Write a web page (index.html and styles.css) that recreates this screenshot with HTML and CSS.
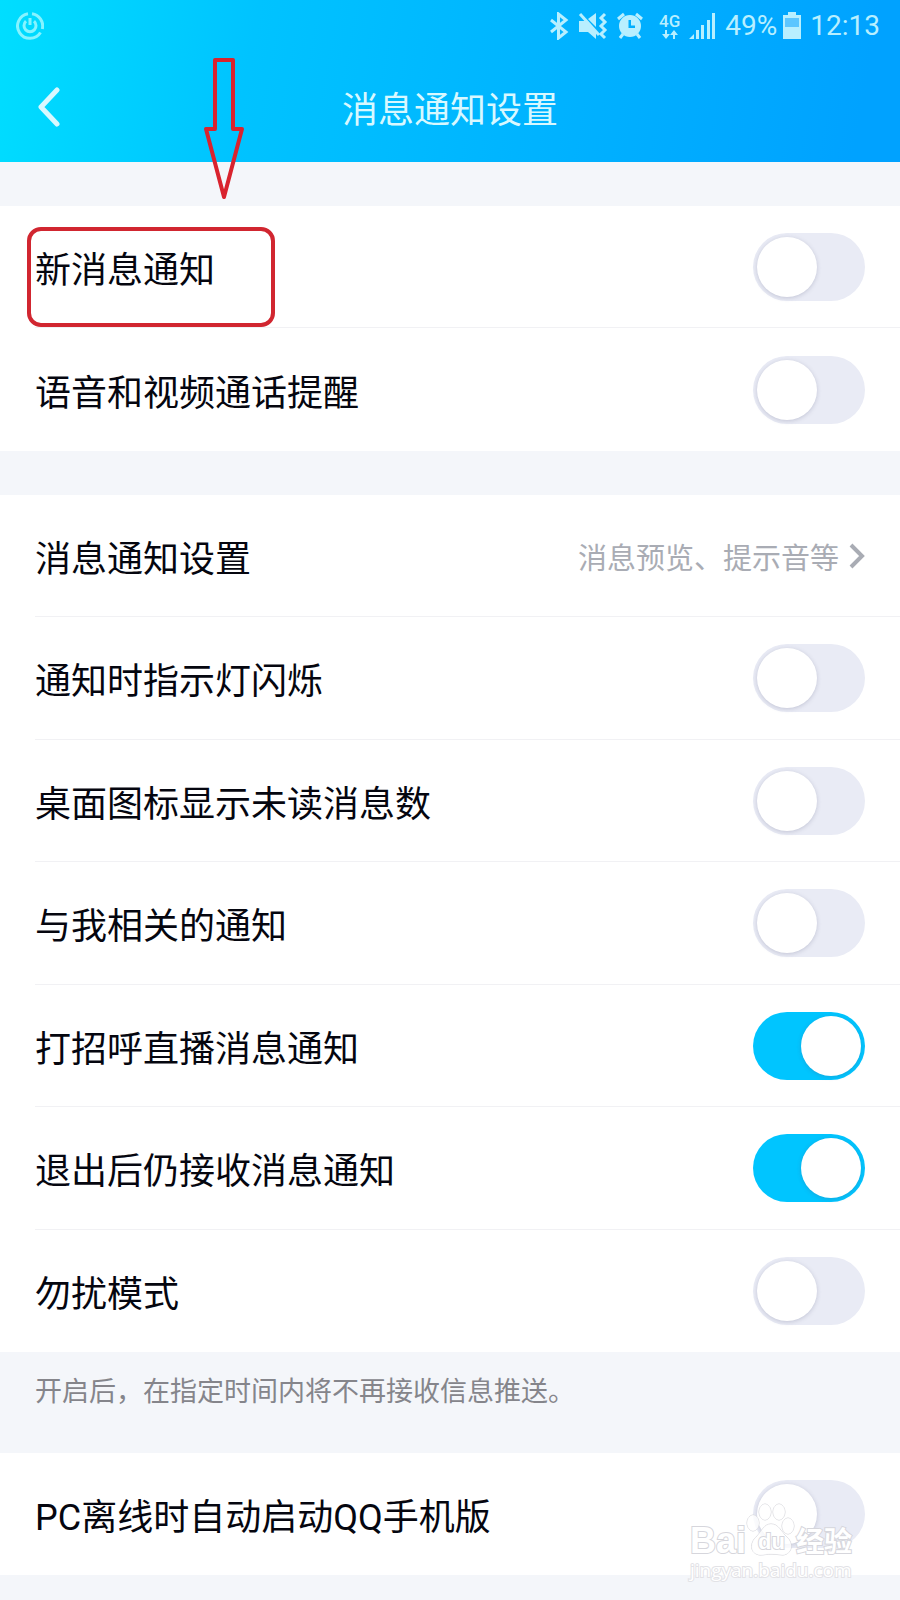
FILE: index.html
```html
<!DOCTYPE html>
<html lang="zh-CN">
<head>
    <meta charset="UTF-8">
    <meta name="viewport" content="width=device-width, initial-scale=1.0">
    <title>消息通知设置</title>
    <link rel="stylesheet" href="styles.css">
</head>
<body>
    <header class="header">
        <div class="status-bar">
            <svg class="status-app" width="28" height="28" viewBox="0 0 28 28" fill="none" stroke="currentColor" stroke-width="3">
                <path d="M12 1.7A12.4 12.4 0 1 0 24.5 20.5M16 1.7A12.4 12.4 0 0 1 26.3 17"/>
                <path d="M10 9.2A6 6 0 1 0 18 9.2M14 6v7"/>
            </svg>
            <div class="status-icons">
                <svg width="20" height="28" viewBox="0 0 20 28" fill="none" stroke="currentColor" stroke-width="3">
                    <path d="M2 8l15 12-7.500 6V2l7.500 6L2 20"/>
                </svg>
                <svg width="30" height="28" viewBox="0 0 30 28" fill="currentColor">
                    <path d="M1 9h6l11 11v7l-8-7H1zM10 7l8-6v14z"/>
                    <path d="M2 2l19 21" stroke="currentColor" stroke-width="3"/>
                    <path d="M27 2l-4 4 4 4-4 4 4 4-4 4 4 4" fill="none" stroke="currentColor" stroke-width="3"/>
                </svg>
                <svg width="26" height="28" viewBox="0 0 26 28" fill="currentColor">
                    <path fill-rule="evenodd" d="M13 3a11 11 0 1 1 0 22 11 11 0 0 1 0-22zm-1.500 5v8H18v-2.500h-4V8z"/>
                    <path d="M1 7l6-5M25 7l-6-5M6 22l-3 4M20 22l3 4" fill="none" stroke="currentColor" stroke-width="3"/>
                </svg>
                <span class="network">
                    <span>4G</span>
                    <svg width="16" height="9" viewBox="0 0 16 9" fill="currentColor">
                        <path d="M3 0h2v4h3L4 9 0 4h3zM11 9h2V5h3l-4-5-4 5h3z"/>
                    </svg>
                </span>
                <svg width="27" height="28" viewBox="0 0 27 28" fill="currentColor">
                    <path d="M0 27l5-5v5zM7 18h3v9H7zM12 13h3v14h-3zM18 8h3v19h-3zM23 1h3v26h-3z"/>
                </svg>
                <span class="battery">
                    <span class="status-text">49%</span>
                    <svg width="18" height="28" viewBox="0 0 18 28" fill="currentColor">
                        <path d="M5 0h8v3h5v24H0V3h5z"/>
                        <path d="M2 6h14v9H2z" fill="#5cc6ff"/>
                    </svg>
                </span>
                <span class="status-text">12:13</span>
            </div>
        </div>
        <nav class="nav">
            <button type="button" class="btn-back" aria-label="返回">
                <svg width="22" height="40" viewBox="0 0 22 40" fill="none" stroke="currentColor" stroke-width="5" stroke-linecap="round" stroke-linejoin="round">
                    <path d="M19 3L3 20l16 17"/>
                </svg>
            </button>
            <h1>消息通知设置</h1>
        </nav>
        <!-- Arrow pointing at the first setting -->
        <svg class="arrow" width="42" height="144" viewBox="0 0 42 144" fill="none" stroke="#d9232e" stroke-width="4" stroke-linejoin="round">
            <path d="M12 3h18v69h9L21 140 3 72h9z"/>
        </svg>
    </header>

    <main>
        <section class="group">
            <div class="row">
                <label for="new-message">新消息通知</label>
                <input type="checkbox" class="switch" id="new-message">
                <span class="highlight"></span>
            </div>
            <div class="row">
                <label for="call">语音和视频通话提醒</label>
                <input type="checkbox" class="switch" id="call">
            </div>
        </section>

        <section class="group">
            <a class="row" href="#preview">
                <span>消息通知设置</span>
                <span class="detail">
                    消息预览、提示音等
                    <svg width="16" height="26" viewBox="0 0 16 26" fill="none" stroke="#a9acb4" stroke-width="4">
                        <path d="M2 2l11 11L2 24"/>
                    </svg>
                </span>
            </a>
            <div class="row">
                <label for="light">通知时指示灯闪烁</label>
                <input type="checkbox" class="switch" id="light">
            </div>
            <div class="row">
                <label for="badge">桌面图标显示未读消息数</label>
                <input type="checkbox" class="switch" id="badge">
            </div>
            <div class="row">
                <label for="related">与我相关的通知</label>
                <input type="checkbox" class="switch" id="related">
            </div>
            <div class="row">
                <label for="live">打招呼直播消息通知</label>
                <input type="checkbox" class="switch" id="live" checked>
            </div>
            <div class="row">
                <label for="after-exit">退出后仍接收消息通知</label>
                <input type="checkbox" class="switch" id="after-exit" checked>
            </div>
            <div class="row">
                <label for="quiet">勿扰模式</label>
                <input type="checkbox" class="switch" id="quiet">
            </div>
        </section>
        <p class="note">开启后，在指定时间内将不再接收信息推送。</p>

        <section class="group last">
            <div class="row">
                <label for="pc">PC离线时自动启动QQ手机版</label>
                <input type="checkbox" class="switch" id="pc">
            </div>
            <div class="watermark">
                <div class="watermark-logo">
                    <span class="bai">Bai</span>
                    <span class="paw">
                        <svg width="50" height="54" viewBox="0 0 50 54" fill="#fff" fill-opacity="0.8" stroke="#d3d3d9">
                            <ellipse cx="7" cy="21" rx="6" ry="8"/>
                            <ellipse cx="19" cy="10" rx="6" ry="8"/>
                            <ellipse cx="33" cy="10" rx="6" ry="8"/>
                            <ellipse cx="42" cy="24" rx="6" ry="8"/>
                            <path d="M25 22c-7 0-9 7-14 12-8 7-7 18 3 19 5 0 7-1 11-1s8 1 12 1c9-1 11-11 4-18-6-5-8-13-16-13z"/>
                        </svg>
                        <span class="du">du</span>
                    </span>
                    <span class="jingyan">经验</span>
                </div>
                <div class="watermark-url">jingyan.baidu.com</div>
            </div>
        </section>
    </main>
</body>
</html>
```

FILE: styles.css
```css
* {
    box-sizing: border-box;
}
body {
    margin: 0;
    min-height: 100vh;
    background: #f4f6fa;
    color: #05060f;
    font-family: Roboto, "Noto Sans CJK SC", sans-serif;
    font-size: 36px;
}
svg {
    display: block;
    flex: none;
}
.header {
    position: relative;
    background: linear-gradient(100deg, #00deff 0%, #00c3ff 28%, #00a2ff 95%);
    color: #d8f8ff;
}
.status-bar {
    display: flex;
    justify-content: space-between;
    align-items: center;
    height: 52px;
    padding: 0 20px 0 16px;
    color: #b8efff;
}
.status-app {
    color: #86f3ff;
}
.status-icons {
    display: flex;
    align-items: center;
    gap: 9px;
}
.network {
    display: flex;
    flex-direction: column;
    align-items: center;
    margin-left: 7px;
    font-size: 17px;
    font-weight: 500;
    line-height: 17px;
}
.battery {
    display: flex;
    align-items: center;
    gap: 6px;
}
.status-text {
    font-size: 28px;
    line-height: 28px;
}
.nav {
    display: grid;
    grid-template-columns: 80px 1fr 80px;
    align-items: center;
    height: 110px;
}
.nav h1 {
    margin: 0;
    text-align: center;
    font-size: 36px;
    font-weight: 400;
}
.btn-back {
    padding: 0 0 0 38px;
    border: none;
    background: none;
    color: inherit;
    cursor: pointer;
}
.arrow {
    position: absolute;
    z-index: 1;
    top: 57px;
    left: 203px;
}
.group {
    margin-top: 44px;
    background: #fff;
}
.row {
    position: relative;
    display: flex;
    justify-content: space-between;
    align-items: center;
    min-height: 122px;
    padding-right: 35px;
    margin-left: 35px;
    border-bottom: 1px solid #f1f1f4;
    color: inherit;
    text-decoration: none;
}
.row:nth-child(even) {
    min-height: 123px;
}
.row:last-child {
    border-bottom: none;
}
.detail {
    display: flex;
    align-items: center;
    gap: 10px;
    color: #a9acb4;
    font-size: 29px;
}
.switch {
    appearance: none;
    display: flex;
    width: 112px;
    height: 68px;
    margin: 0;
    padding: 4px;
    border-radius: 34px;
    background: #e9ebf5;
    cursor: pointer;
}
.switch::before {
    content: "";
    width: 60px;
    height: 60px;
    border-radius: 50%;
    background: #fff;
    box-shadow: 0 1px 4px rgba(80, 85, 120, 0.25);
}
.switch:checked {
    justify-content: flex-end;
    background: #00c5ff;
}
.highlight {
    position: absolute;
    top: 21px;
    left: -8px;
    width: 248px;
    height: 100px;
    border: 4px solid #d12630;
    border-radius: 14px;
    pointer-events: none;
}
.note {
    margin: 0;
    padding: 20px 35px 0;
    color: #85858b;
    font-size: 27px;
    line-height: 40px;
}
.last {
    position: relative;
    margin-top: 41px;
}
.last .row {
    border-bottom: none;
}
/* Watermark over the bottom right corner */
.watermark {
    position: absolute;
    right: 48px;
    top: 49px;
    color: #fff;
    font-family: "Liberation Sans", "Noto Sans CJK SC", sans-serif;
    -webkit-text-stroke: 2px #d6d6dc;
    paint-order: stroke fill;
    pointer-events: none;
}
.watermark-logo {
    display: flex;
    align-items: flex-end;
    font-weight: 700;
}
.bai {
    font-size: 36px;
    line-height: 30px;
}
.paw {
    position: relative;
}
.du {
    position: absolute;
    left: 12px;
    bottom: 2px;
    font-size: 22px;
    line-height: 24px;
}
.jingyan {
    font-size: 28px;
    line-height: 26px;
}
.watermark-url {
    margin-top: 2px;
    font-family: "Open Sans", sans-serif;
    font-size: 19px;
    line-height: 24px;
    -webkit-text-stroke: 2px #e2e2e6;
}
```
